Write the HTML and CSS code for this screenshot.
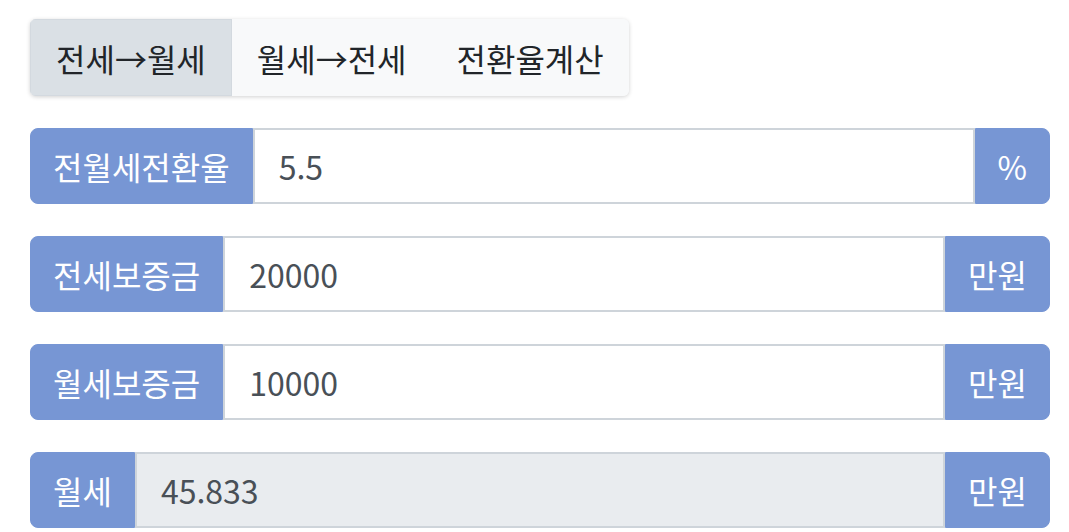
FILE: index.html
```html
<!DOCTYPE html>
<html lang="ko">
<head>
    <meta charset="UTF-8">
    <meta name="viewport" content="width=device-width, initial-scale=1.0">
    <title>전월세 전환 계산기</title>
    <link rel="stylesheet" href="styles.css">
</head>
<body>

    <div class="calc-container">
        <div class="tab-group">
            <button class="tab-btn active">전세→월세</button>
            <button class="tab-btn">월세→전세</button>
            <button class="tab-btn">전환율계산</button>
        </div>

        <div class="input-group">
            <span class="addon addon-left">전월세전환율</span>
            <input type="text" class="form-control" value="5.5">
            <span class="addon addon-right">%</span>
        </div>

        <div class="input-group">
            <span class="addon addon-left">전세보증금</span>
            <input type="text" class="form-control" value="20000">
            <span class="addon addon-right">만원</span>
        </div>

        <div class="input-group">
            <span class="addon addon-left">월세보증금</span>
            <input type="text" class="form-control" value="10000">
            <span class="addon addon-right">만원</span>
        </div>

        <div class="input-group">
            <span class="addon addon-left">월세</span>
            <input type="text" class="form-control" value="45.833" readonly>
            <span class="addon addon-right">만원</span>
        </div>
    </div>

</body>
</html>
```

FILE: styles.css
```css
body {
    font-family: "Noto Sans CJK KR", "Noto Sans", sans-serif;
    background: #ffffff;
    margin: 0;
    padding: 19px 0 0 30px;
}

.calc-container {
    width: 1020px;
    display: flex;
    flex-direction: column;
    align-items: flex-start;
    gap: 32px;
}

.tab-group {
    display: flex;
    background: #f8f9fa;
    border-radius: 6px;
    box-shadow: 0 1px 4px rgba(0, 0, 0, 0.18);
    overflow: hidden;
}

.tab-btn {
    font-family: inherit;
    font-size: 32px;
    line-height: 48px;
    height: 77px;
    padding: 0 24px;
    border: 1px solid transparent;
    background: #f8f9fa;
    color: #212529;
    cursor: pointer;
}

.tab-btn.active {
    padding: 0 25px;
    background: #dae0e5;
    border-color: #d3d9df;
}

.input-group {
    display: flex;
    width: 100%;
    height: 76px;
}

.addon {
    display: flex;
    align-items: center;
    padding: 0 22px;
    font-size: 32px;
    color: #ffffff;
    background: #7796d4;
    border: 1px solid #7796d4;
    white-space: nowrap;
}

.addon-left {
    border-radius: 8px 0 0 8px;
}

.addon-right {
    border-radius: 0 8px 8px 0;
}

.form-control {
    flex: 1;
    min-width: 0;
    font-family: inherit;
    font-size: 32px;
    color: #495057;
    padding: 0 24px;
    border: 2px solid #ced4da;
    background: #ffffff;
    outline: none;
}

.form-control[readonly] {
    background: #e9ecef;
}
```
